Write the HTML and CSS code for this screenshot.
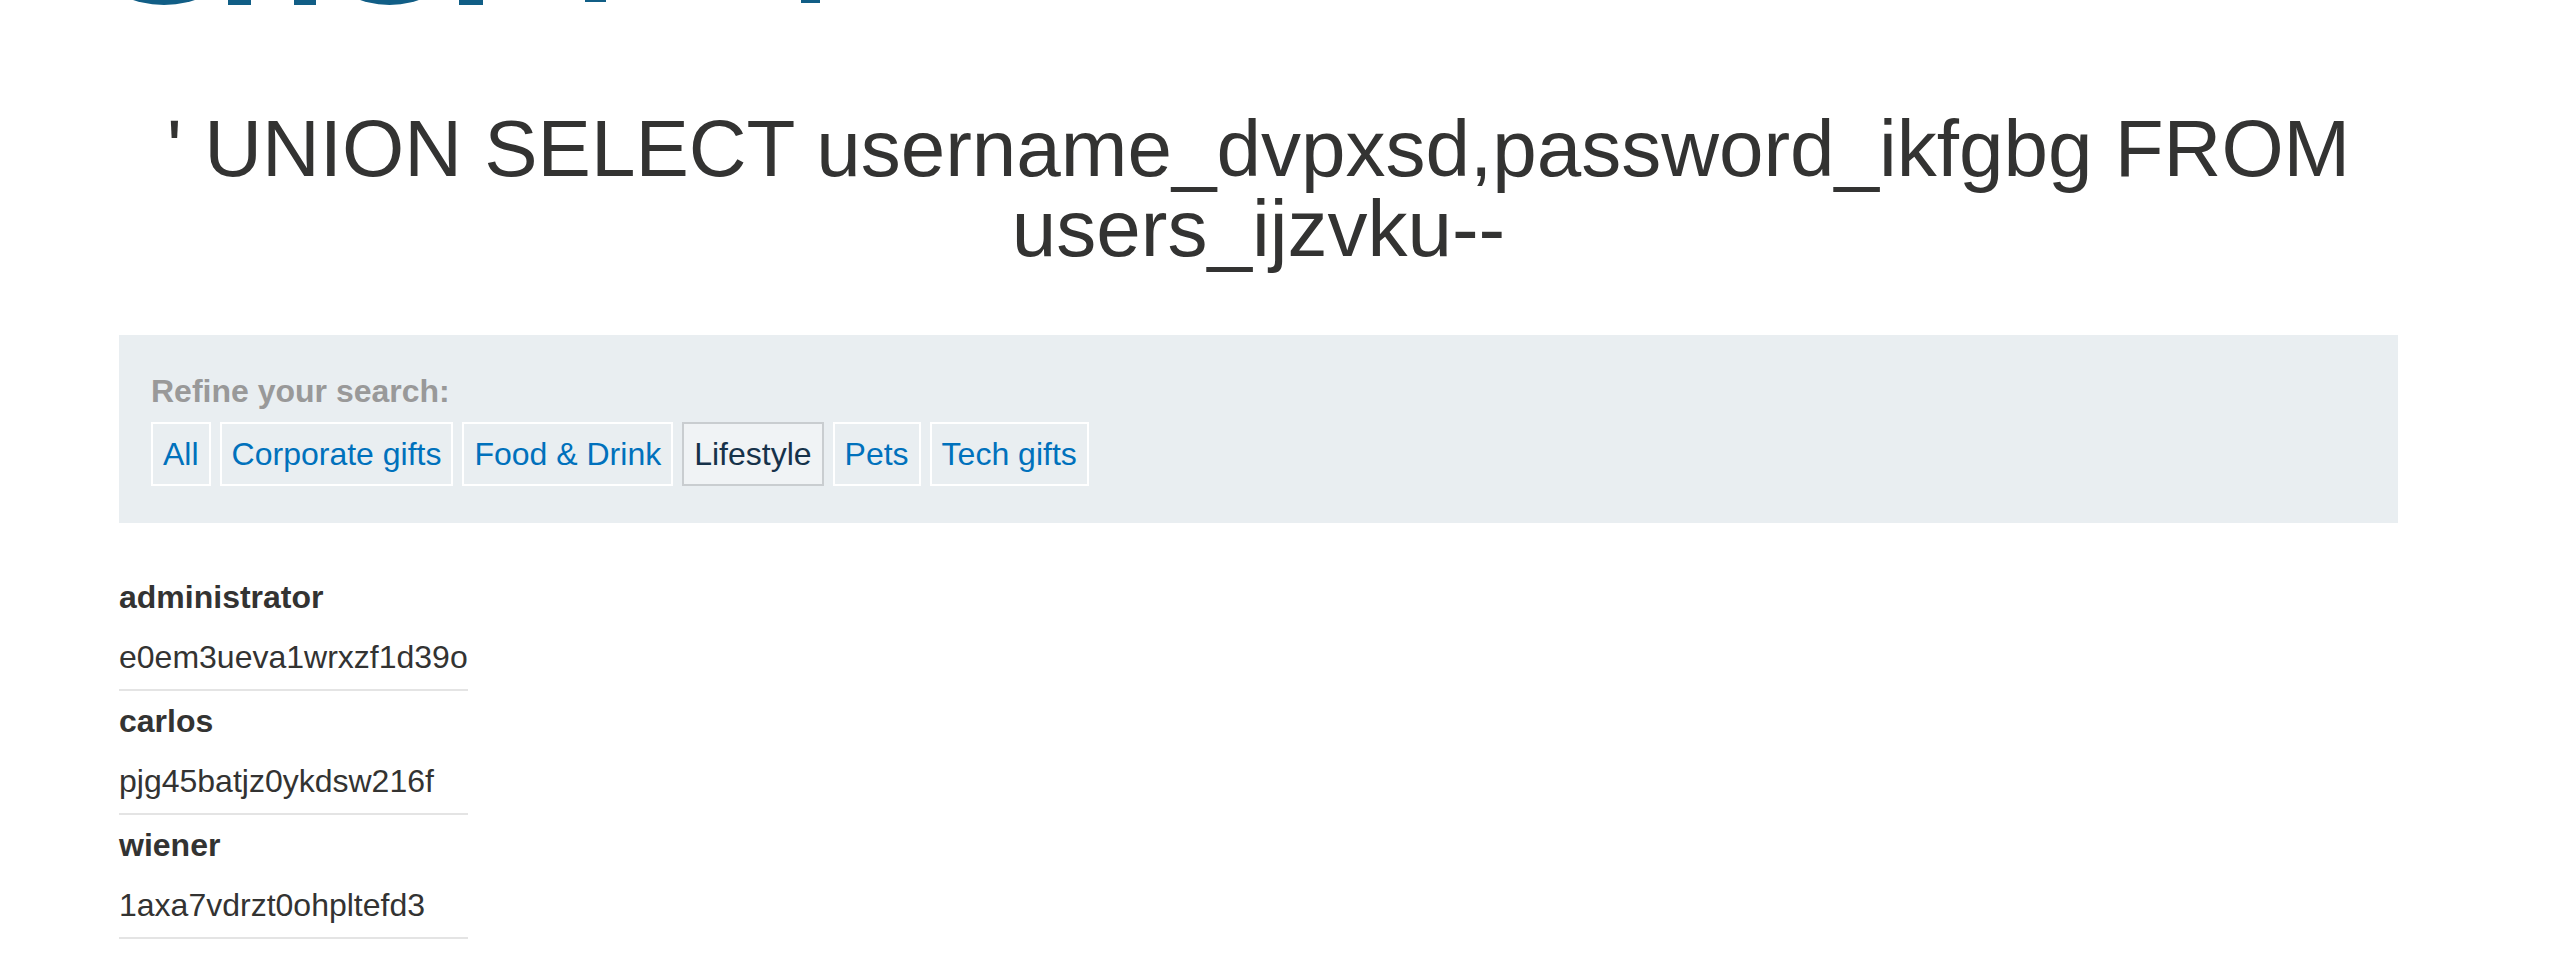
FILE: index.html
```html
<!DOCTYPE html>
<html lang="en">
<head>
<meta charset="utf-8">
<title>Shop</title>
<link rel="stylesheet" href="styles.css">
</head>
<body>
<header class="hero">
  <svg class="hero-art" width="900" height="6" viewBox="0 0 900 6" aria-hidden="true">
    <ellipse cx="164" cy="-30" rx="60" ry="35" fill="#115e86"/>
    <rect x="228" y="-2" width="23" height="7" fill="#115e86"/>
    <rect x="294" y="-2" width="22" height="7" fill="#115e86"/>
    <ellipse cx="389.5" cy="-30" rx="57" ry="35" fill="#115e86"/>
    <rect x="459" y="-2" width="24" height="7" fill="#115e86"/>
    <rect x="585" y="-2" width="21" height="4" fill="#115e86"/>
    <rect x="801" y="-2" width="19" height="5" fill="#115e86"/>
  </svg>
</header>
<main class="container">
  <h1 class="search-title">' UNION SELECT username_dvpxsd,password_ikfgbg FROM users_ijzvku--</h1>
  <section class="filters">
    <div class="filters-label">Refine your search:</div>
    <div class="filters-list">
      <a class="filter" href="#">All</a>
      <a class="filter" href="#">Corporate gifts</a>
      <a class="filter" href="#">Food &amp; Drink</a>
      <a class="filter is-selected" href="#">Lifestyle</a>
      <a class="filter" href="#">Pets</a>
      <a class="filter" href="#">Tech gifts</a>
    </div>
  </section>
  <table class="results">
    <tbody>
      <tr><th>administrator</th></tr>
      <tr><td>e0em3ueva1wrxzf1d39o</td></tr>
      <tr><th>carlos</th></tr>
      <tr><td>pjg45batjz0ykdsw216f</td></tr>
      <tr><th>wiener</th></tr>
      <tr><td>1axa7vdrzt0ohpltefd3</td></tr>
    </tbody>
  </table>
</main>
</body>
</html>
```
FILE: styles.css
```css
html, body {
  margin: 0;
  padding: 0;
  background: #ffffff;
}

body {
  font-family: "Liberation Sans", Arial, Helvetica, sans-serif;
  font-size: 32px;
  color: #333332;
}

.hero {
  height: 6px;
  overflow: hidden;
}

.hero-art {
  display: block;
}

.container {
  margin: 0 153px 0 119px;
}

.search-title {
  margin: 103px 0 66px;
  font-size: 80px;
  line-height: 80px;
  font-weight: normal;
  text-align: center;
  color: #333332;
}

.filters {
  background: #e9eef1;
  padding: 36px 32px 37px;
}

.filters-label {
  font-weight: bold;
  color: #999999;
  line-height: 40px;
  margin-bottom: 11px;
}

.filters-list {
  display: flex;
  flex-wrap: wrap;
  gap: 9px;
}

.filter {
  display: block;
  padding: 10px;
  line-height: 40px;
  border: 2px solid #ffffff;
  color: #0071bc;
  text-decoration: none;
}

.filter.is-selected {
  color: #16324a;
  background: #f0f3f5;
  border-color: #c9cdd0;
}

.results {
  margin-top: 44px;
  border-collapse: collapse;
  border-spacing: 0;
}

.results th,
.results td {
  text-align: left;
  padding: 10px 0;
  line-height: 40px;
  font-size: 32px;
}

.results th {
  font-weight: bold;
}

.results td {
  font-weight: normal;
  padding-bottom: 12px;
  border-bottom: 2px solid #e4e4e4;
}
```
